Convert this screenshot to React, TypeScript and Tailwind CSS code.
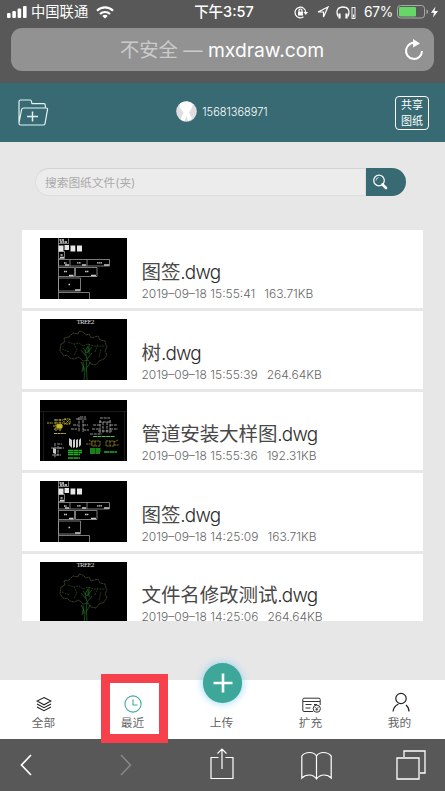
import type { ReactNode } from "react";

type Drawing = "frames" | "tree" | "pipes";

interface DrawingFile {
  id: number;
  name: string;
  date: string;
  size: string;
  drawing: Drawing;
}

const files: DrawingFile[] = [
  { id: 1, name: "图签", date: "2019–09–18 15:55:41", size: "163.71KB", drawing: "frames" },
  { id: 2, name: "树", date: "2019–09–18 15:55:39", size: "264.64KB", drawing: "tree" },
  { id: 3, name: "管道安装大样图", date: "2019–09–18 15:55:36", size: "192.31KB", drawing: "pipes" },
  { id: 4, name: "图签", date: "2019–09–18 14:25:09", size: "163.71KB", drawing: "frames" },
  { id: 5, name: "文件名修改测试", date: "2019–09–18 14:25:06", size: "264.64KB", drawing: "tree" },
];

const FramesDrawing = () => (
  <g fill="none" stroke="#999" strokeWidth="0.8">
    <path d="M18.5 0v61M18.5 5.5h10v-5M18.5 13.5h6v7h-6M18.5 21.5h51v6.5h-51zM30 21.5V28M47 21.5V28M18.5 29.5h16v9h-16M35.5 29.5h21.5v9h-21.5zM18.5 40h22v13h-22zM18.5 54.5h31v7" />
    <path d="M19.5 2h5M20 4h7" stroke="#ddd" strokeWidth="1.5" strokeDasharray="2 .5" />
    <g fill="#e6e6e6" stroke="none">
      <rect x="18.5" y="7.5" width="5" height="6" />
      <rect x="24.5" y="7" width="4.5" height="5" />
      <rect x="30.5" y="7.5" width="4.8" height="6" />
      <rect x="37" y="7.5" width="5" height="6" />
    </g>
    <g stroke="#ccc" strokeWidth="1.3">
      <path d="M25 27h4M42 27h4M64 27h5M29 37.5h4.5M51 37.5h5M35 52h5M20 19.5h4" />
      <path d="M24 25h2.5M37 24.8h4M57 24.8h5M24 33.5h3M45 33.5h3.5M28.5 46.5h2M20.5 17h2.5" strokeDasharray="1.5 .4" />
    </g>
  </g>
);

const TreeDrawing = () => (
  <g fill="none" strokeWidth="0.6">
    <text x="36.5" y="4.8" fill="#ddd" fontSize="7" textLength="18" className="font-['Liberation_Serif']">
      TREE2
    </text>
    <path
      d="M24 37l-4-5 1-7 4-2-1-4 5-1 4-4 5 1 1-3 4 1 3 3 3-1 2 4 7-2 2 4 5 1 1 4 1 2-2 4 2 4-3 4-5 2-3 4-5-1-3-4-5 1-4-4-5 2-4-1-3-3z"
      stroke="#5a683c"
      strokeDasharray="2.5 .4"
    />
    <path d="M28 23l6 2 5-1 4 3 5-2 6 2 11 0M34 36l3-5-3-6M55 33l3-8M22 30l7 3M59 38l2-8" stroke="#2a622a" strokeDasharray="2 .8" />
    <path
      d="M44 61l1-10-4-8M47 61l-.5-12 4-6M46 50l1-10-2-8 3-5M47 40l5-6M46 37l-5-6M48 33v-5M43 48l-1 5M49 25v10M43 29l4 5 5-6M44 52l-1-9"
      stroke="#2a832a"
    />
  </g>
);

const PipesDrawing = () => (
  <g fill="none" strokeWidth="1">
    <path d="M0 11.5h87M3.5 11.5V61M84.5 11.5V61" stroke="#2c2c2c" strokeWidth="0.6" />
    <g stroke="#b5a52c">
      <path d="M14 20h9M14 23h9M13 26h10M14 29h8M16 19v12M20 19v12M7 23h6M25 19l5 5M30 19l-5 5M24 19h6v5h-6z" strokeDasharray="2 .6" />
      <path d="M17 24.5h5v3.5h-5z" fill="#c9b92f" />
      <path d="M14 33.5h12" strokeDasharray="3 .4" />
      <path d="M52 41h8v5h-8zM66 41h8v5h-8zM49 40l3 2M74 42l4-2M46 44h6M74 45h5M55 41v5M70 41v5" strokeWidth=".7" strokeDasharray="2 .6" />
    </g>
    <g stroke="#a5a5a5" strokeWidth=".9">
      <path d="M39 17v15M43 20v12M36 19h11M33 25h5M43 25h5M31 29h6M43 30h6M40 17h6M60 18h10" strokeDasharray="3 .7" />
      <path d="M60 20v13M63 22v11M67 22v11M70 20v13M53 25h8M70 25h7M52 29h8M70 29h8M50 34h12M59 22h12M58 31h14" strokeDasharray="3 .8" />
      <path d="M15 43v15M18 46v10M11 48h11M12 55h9M17 44h5M19 48h5" strokeDasharray="3 .7" />
    </g>
    <path d="M13 48l3 1v5l-3-1zM29 38l3 2v8l-3-3zM33 40l2-1v8l-2 1zM36 40l2-1v8l-2 1zM39 40l2-2v7l-2 2z" fill="#ccc" />
    <path d="M53 36.5h22" stroke="#4bc04b" strokeDasharray="4 .4" />
    <path d="M28 50.5h14M28 52.5h14M28 54.5h12M28 58h12M50 49h11M50 51h11M50 53h10M64 52h13" stroke="#22ac22" strokeWidth="1.3" strokeDasharray="5 .4" />
  </g>
);

const Thumbnail = ({ drawing }: { drawing: Drawing }) => (
  <svg viewBox="0 0 87 61" className="w-[87px] h-[61px] shrink-0 bg-black">
    {drawing === "frames" && <FramesDrawing />}
    {drawing === "tree" && <TreeDrawing />}
    {drawing === "pipes" && <PipesDrawing />}
  </svg>
);

const StatusBar = () => (
  <div className="grid grid-cols-[1fr_auto_1fr] items-center h-6 pl-[7px] pr-[6px] text-white">
    <div className="flex items-center">
      <svg width="20" height="12" viewBox="0 0 20 12" fill="white">
        <rect y="7" width="3.6" height="5" rx="1" />
        <rect x="5.3" y="5" width="3.6" height="7" rx="1" />
        <rect x="10.6" y="2.5" width="3.6" height="9.5" rx="1" />
        <rect x="16" y="0" width="3.6" height="12" rx="1" />
      </svg>
      <span className="ml-1 text-[14.3px]">中国联通</span>
      <svg className="ml-[8px]" width="18" height="13" viewBox="0 0 18 13" fill="none" stroke="white" strokeWidth="2.2">
        <path d="M1 4.7a11.5 11.5 0 0 1 16 0M4 8a7.2 7.2 0 0 1 10 0" />
        <path d="M9 12.5L6.3 9.9a4 4 0 0 1 5.4 0z" fill="white" stroke="none" />
      </svg>
    </div>
    <span className="text-[14.5px] font-medium translate-x-px">下午3:57</span>
    <div className="flex items-center justify-end">
      {/* Rotation lock */}
      <svg width="14" height="13" viewBox="0 0 14 13" fill="none" stroke="white" strokeWidth="1.2">
        <path d="M11.7 6.5A5.3 5.3 0 1 0 9.5 10.8" />
        <path d="M9.5 6h4.5l-2.3 3z" fill="white" stroke="none" />
        <rect x="4" y="5.7" width="5" height="3.8" fill="white" stroke="none" />
        <path d="M5 6V4.5a1.5 1.5 0 0 1 3 0V6" />
      </svg>
      <svg className="ml-[9px]" width="12" height="12" viewBox="0 0 12 12" fill="none" stroke="white" strokeWidth="1.2">
        <path d="M1 6L11 1 6.5 11V6z" />
      </svg>
      <svg className="ml-[7px]" width="21" height="13" viewBox="0 0 21 13" fill="none" stroke="white" strokeWidth="1.3">
        <path d="M2 10.5C-.5 4.5 2 1 7 1s7.5 3.5 5 9.5" />
        <path d="M3.5 7.5v5M10.5 7.5v5" strokeWidth="2.2" />
        <rect x="16" y="1.5" width="3" height="11" strokeWidth=".9" />
        <path d="M17.5 8.5v3" />
      </svg>
      <span className="ml-[7px] text-[13.8px] tracking-[-0.3px]">67%</span>
      <svg className="ml-[4px]" width="42" height="14" viewBox="0 0 42 14" fill="none">
        <rect x=".5" y=".5" width="27" height="12.5" rx="3" stroke="#aaa" />
        <rect x="2" y="2" width="17" height="9.5" rx="1" fill="#67d868" />
        <path d="M29.5 4.5c2 .5 2 4 0 4.5z" fill="#aaa" />
        <path d="M38.5 1.5L34 7.8h3L36 12.5 41 6h-3.5z" fill="white" />
      </svg>
    </div>
  </div>
);

const AddressBar = () => (
  <div className="flex items-center h-[43px] mx-[11px] mt-1 rounded-[11px] bg-[#929292]">
    <p className="flex-1 pl-[109px] pt-0.5 text-[19.3px] leading-none text-white whitespace-nowrap">
      <span className="text-[#cbcbcb]">不安全 — </span>mxdraw.com
    </p>
    <svg className="mr-[10px]" width="20" height="22" viewBox="0 0 20 22" fill="none" stroke="white" strokeWidth="2">
      <path d="M12.5 4.3A8 8 0 1 0 18 12" />
      <path d="M9 0l7 4.5L9 8.5z" fill="white" stroke="none" />
    </svg>
  </div>
);

const Header = () => (
  <header className="flex items-center justify-between h-[59px] pl-[18px] pr-4 bg-[#376a72] text-white">
    <svg width="31" height="27" viewBox="0 0 31 27" fill="none" stroke="#e4f1f2" strokeWidth="1.2" strokeLinejoin="round">
      <path d="M1 24V2.5Q1 1 2.5 1H12q1.3 0 1.5 1.5l.4 2.2h12q1.4 0 1.4 1.5V9M1 24L3.6 10.5Q4 9 5.5 9H28q1.8 0 1.5 1.7L27 24.6Q26.7 26 25.3 26H2.5Q1 26 1 24z" />
      <path d="M14.5 12.5v10M9 17.5h11" strokeWidth="1.5" />
    </svg>
    <div className="flex items-center -translate-y-px">
      <svg width="21" height="21" viewBox="0 0 21 21">
        <circle cx="10.5" cy="10.5" r="10.3" fill="#dedee0" />
        <path d="M4 2.5Q7 0 10.5.5q4 0 6.5 3l-2 5-2 3 3 6-4 3-1.5-6-2 6-4-2 3-7-4-5z" fill="white" />
      </svg>
      <span className="ml-[5px] pt-0.5 text-[11px] font-light">15681368971</span>
    </div>
    <button className="w-[34px] h-[34px] border border-white rounded-[4px] text-[11px] leading-4">
      共享
      <br />
      图纸
    </button>
  </header>
);

const SearchBox = () => (
  <div className="flex h-7 mt-[26px] ml-[35px] mr-[39px]">
    <div className="flex-1 flex items-center pl-[9px] pt-[3px] rounded-l-full border border-[#dedede] border-t-[#d4d4d4] bg-[#ececec] text-[11.7px] text-[#aaa]">
      搜索图纸文件(夹)
    </div>
    <button className="w-10 pl-1.5 rounded-l-[2px] rounded-r-full bg-[#376a72]">
      <svg width="16" height="16" viewBox="0 0 16 16" fill="none" stroke="white">
        <circle cx="7" cy="6.5" r="5.3" strokeWidth="1.2" />
        <path d="M4 6.5Q4 4 6.5 3.5" strokeWidth=".8" />
        <path d="M10.5 10.5L14 14" strokeWidth="2.6" strokeLinecap="round" />
      </svg>
    </button>
  </div>
);

const FileRow = ({ file }: { file: DrawingFile }) => (
  <div className="flex h-[78px] shrink-0 pt-[8.4px] pl-[18px] bg-white">
    <Thumbnail drawing={file.drawing} />
    <div className="ml-[14.5px] pt-[22.5px] whitespace-nowrap">
      <p className="text-[19.5px] leading-[23px] tracking-[-0.1px] text-[#484848]">
        {file.name}
        <span className="text-[18.9px] tracking-[-0.8px] font-light text-[#2c2c2c]">.dwg</span>
      </p>
      <p className="flex gap-[9px] mt-[2px] text-[12px] leading-[15px] text-[#666] font-light">
        <span>{file.date}</span>
        <span>{file.size}</span>
      </p>
    </div>
  </div>
);

interface TabProps {
  label: string;
  children?: ReactNode;
}

const Tab = ({ label, children }: TabProps) => (
  <div className="flex flex-col items-center w-[89px] pt-[14px]">
    <div className="flex items-center justify-center h-5">{children}</div>
    <span className="text-[11.7px] leading-[19px] text-[#666]">{label}</span>
  </div>
);

const TabBar = () => (
  <nav className="relative flex h-[59px] -ml-px bg-white">
    <Tab label="全部">
      <svg width="16" height="16" viewBox="0 0 16 16" fill="none" stroke="#222" strokeWidth="1.1">
        <path d="M8 1.5L15 5 8 8.8 1 5zM1 8l7 3.7L15 8M1 11l7 3.7L15 11" />
      </svg>
    </Tab>
    <Tab label="最近">
      <svg width="18" height="18" viewBox="0 0 18 18" fill="none" stroke="#43a99d" strokeWidth="1.1">
        <circle cx="9" cy="9" r="8.1" />
        <path d="M9 4.5V10h4.5" />
      </svg>
    </Tab>
    <Tab label="上传" />
    <Tab label="扩充">
      <svg width="19" height="16" viewBox="0 0 19 16" fill="none" stroke="#333" strokeWidth="1" className="translate-x-px translate-y-px">
        <path d="M11 14.5H2Q.8 14.5.8 13V2.5Q.8 1.2 2 1.2h15q1.2 0 1.2 1.3V8M1 4.5h17M3.5 7.5h6M12 7.5h3M3.5 11h5" />
        <circle cx="14.8" cy="11.7" r="3.6" />
        <path d="M13 9.8l1.8 2 1.8-2M14.8 11.8v2.5M13.3 12.3h3" strokeWidth=".8" />
      </svg>
    </Tab>
    <Tab label="我的">
      <svg width="18" height="20" viewBox="0 0 18 20" fill="none" stroke="#222" strokeWidth="1.2" className="translate-x-px -translate-y-0.5">
        <circle cx="9" cy="6.5" r="5.2" />
        <path d="M1 19.5q.5-5 5.5-7.5M14 13q3 2.5 3 6.5" />
      </svg>
    </Tab>

    {/* Upload button raised over the bar */}
    <button className="absolute left-[204px] top-[-17px] flex items-center justify-center w-[39px] h-[40px] rounded-full bg-[#3da79a] shadow-[0_0_9px_#8fd0f0]">
      <svg width="20" height="20" viewBox="0 0 20 20" stroke="white" strokeWidth="2.6">
        <path d="M10 .5v19M.5 10h19" />
      </svg>
    </button>

    {/* Highlight around the recent tab */}
    <div className="absolute z-10 left-[102px] top-[-6px] w-[67px] h-[69px] border-[9px] border-[#f6404b]" />
  </nav>
);

const BrowserToolbar = () => (
  <div className="flex items-center h-[52px] pl-[20px] bg-[#585858]">
    <svg width="12" height="22" viewBox="0 0 12 22" fill="none" stroke="white" strokeWidth="1.7">
      <path d="M11 1L1.5 11 11 21" />
    </svg>
    <svg width="12" height="22" viewBox="0 0 12 22" fill="none" stroke="#888" strokeWidth="1.5" className="ml-[88px]">
      <path d="M1 1l9.5 10L1 21" />
    </svg>
    <svg width="24" height="33" viewBox="0 0 24 33" fill="none" stroke="white" strokeWidth="1.2" className="ml-[78px] -translate-y-[2px]">
      <path d="M8.5 10.5H1v21h22v-21h-7.5M12 22V2M7.5 6.5L12 2l4.5 4.5" />
    </svg>
    <svg width="31" height="30" viewBox="0 0 31 30" fill="none" stroke="white" strokeWidth="1.2" className="ml-[67px] translate-y-px">
      <path d="M15.5 5v23M15.5 5Q13.5 1.5 8.5 1.5T.8 5v22q3-3 7.5-3t7.2 4q3-4 7.5-4t7.2 3V5q-3-3.5-7.7-3.5T15.5 5" />
    </svg>
    <svg width="30" height="30" viewBox="0 0 30 30" fill="none" stroke="white" strokeWidth="1.3" className="ml-[64px]">
      <path d="M1 8h22v21H1zM8 7V1h21v22h-5" />
    </svg>
  </div>
);

const App = () => {
  return (
    <div className="flex flex-col w-[445px] h-[791px] overflow-hidden bg-[#e7e7e7] font-[Inter,'Noto_Sans_CJK_SC',sans-serif]">
      <div className="h-[83px] shrink-0 bg-[#585858]">
        <StatusBar />
        <AddressBar />
      </div>
      <Header />
      <main className="flex-1">
        <SearchBox />
        <div className="flex flex-col gap-[2.9px] h-[391px] mt-[34px] ml-[22px] mr-[22px] overflow-hidden">
          {files.map((file) => (
            <FileRow key={file.id} file={file} />
          ))}
        </div>
      </main>
      <TabBar />
      <BrowserToolbar />
    </div>
  );
};

export default App;
